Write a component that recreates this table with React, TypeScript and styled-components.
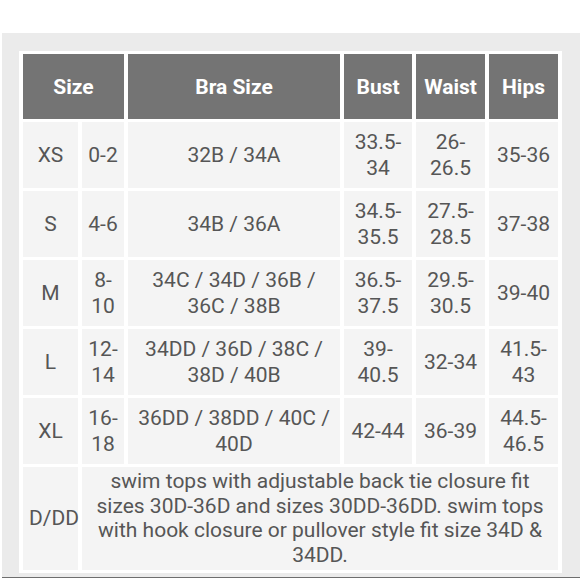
import React from "react";
import styled, { createGlobalStyle } from "styled-components";

const GlobalStyle = createGlobalStyle`
  html, body {
    margin: 0;
    padding: 0;
    background: #ffffff;
    font-family: Roboto, "Noto Sans", "Liberation Sans", sans-serif;
  }
`;

const Page = styled.div`
  width: 580px;
  height: 580px;
  padding-top: 33px;
  padding-left: 2px;
  box-sizing: border-box;
  background: #ffffff;
  overflow: hidden;
`;

const Panel = styled.div`
  background: #ebebeb;
  padding: 18px 0 0 17px;
  border-bottom: 1.5px solid #6e6e6e;
  box-sizing: border-box;
  height: 545px;
`;

const Table = styled.table`
  border-collapse: separate;
  border-spacing: 4px 3.5px;
  background: #ffffff;
  table-layout: fixed;
  width: 543px;
  font-size: 21px;
  color: #565656;
`;

const HeadCell = styled.th`
  background: #747474;
  color: #ffffff;
  font-weight: 700;
  height: 65px;
  padding: 0 2px;
  text-align: center;
  vertical-align: middle;
`;

const Row = styled.tr<{ $tall?: boolean }>`
  height: ${(p) => (p.$tall ? "102.5px" : "66px")};
`;

const Cell = styled.td`
  background: #f4f4f4;
  text-align: center;
  vertical-align: middle;
  padding: 0 6px;
  line-height: 26px;
  font-weight: 400;
`;

const NoteCell = styled(Cell)`
  line-height: 24.5px;
  padding: 2px 8px;
`;

type Item = {
  size: string;
  num: string;
  bra: string;
  bust: string;
  waist: string;
  hips: string;
};

const rows: Item[] = [
  { size: "XS", num: "0-2", bra: "32B / 34A", bust: "33.5-34", waist: "26-26.5", hips: "35-36" },
  { size: "S", num: "4-6", bra: "34B / 36A", bust: "34.5-35.5", waist: "27.5-28.5", hips: "37-38" },
  { size: "M", num: "8-10", bra: "34C / 34D / 36B / 36C / 38B", bust: "36.5-37.5", waist: "29.5-30.5", hips: "39-40" },
  { size: "L", num: "12-14", bra: "34DD / 36D / 38C / 38D / 40B", bust: "39-40.5", waist: "32-34", hips: "41.5-43" },
  { size: "XL", num: "16-18", bra: "36DD / 38DD / 40C / 40D", bust: "42-44", waist: "36-39", hips: "44.5-46.5" },
];

export default function App() {
  return (
    <>
      <GlobalStyle />
      <Page>
        <Panel>
          <Table>
            <colgroup>
              <col style={{ width: 55 }} />
              <col style={{ width: 42 }} />
              <col style={{ width: 212 }} />
              <col style={{ width: 68 }} />
              <col style={{ width: 69 }} />
              <col style={{ width: 69 }} />
            </colgroup>
            <thead>
              <tr>
                <HeadCell colSpan={2}>Size</HeadCell>
                <HeadCell>Bra Size</HeadCell>
                <HeadCell>Bust</HeadCell>
                <HeadCell>Waist</HeadCell>
                <HeadCell>Hips</HeadCell>
              </tr>
            </thead>
            <tbody>
              {rows.map((r) => (
                <Row key={r.size}>
                  <Cell>{r.size}</Cell>
                  <Cell>{r.num}</Cell>
                  <Cell>{r.bra}</Cell>
                  <Cell>{r.bust}</Cell>
                  <Cell>{r.waist}</Cell>
                  <Cell>{r.hips}</Cell>
                </Row>
              ))}
              <Row $tall>
                <Cell>D/DD</Cell>
                <NoteCell colSpan={5}>
                  swim tops with adjustable back tie closure fit sizes 30D-36D and sizes 30DD-36DD. swim tops with hook closure or pullover style fit size 34D &amp; 34DD.
                </NoteCell>
              </Row>
            </tbody>
          </Table>
        </Panel>
      </Page>
    </>
  );
}
